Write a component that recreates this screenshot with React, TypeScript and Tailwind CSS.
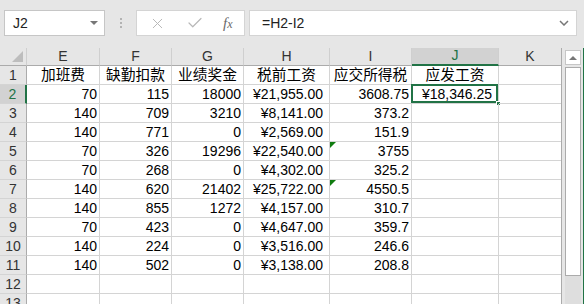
import { X, Check } from 'lucide-react';

const cols = ['E', 'F', 'G', 'H', 'I', 'J', 'K'];
const widths = ['w-[73px]', 'w-[72px]', 'w-[72px]', 'w-[86px]', 'w-[82px]', 'w-[87px]', 'w-[63px]'];

const titles = ['加班费', '缺勤扣款', '业绩奖金', '税前工资', '应交所得税', '应发工资', ''];

// E, F, G, H, I, J
const rows: (string | number)[][] = [
  [70, 115, 18000, '¥21,955.00', '3608.75', '¥18,346.25'],
  [140, 709, 3210, '¥8,141.00', '373.2'],
  [140, 771, 0, '¥2,569.00', '151.9'],
  [70, 326, 19296, '¥22,540.00', '3755'],
  [70, 268, 0, '¥4,302.00', '325.2'],
  [140, 620, 21402, '¥25,722.00', '4550.5'],
  [140, 855, 1272, '¥4,157.00', '310.7'],
  [70, 423, 0, '¥4,647.00', '359.7'],
  [140, 224, 0, '¥3,516.00', '246.6'],
  [140, 502, 0, '¥3,138.00', '208.8'],
  [],
  [],
];

const flagged = [5, 7];

function Cell({ value, col, row }: { value?: string | number; col: number; row: number }) {
  const money = col === 3 || col === 5;
  const selected = col === 5 && row === 2;
  return (
    <div
      className={`relative h-[19px] shrink-0 ${widths[col]} border-r border-b border-[#d4d4d4] flex items-end justify-end pb-[1px] ${money ? 'pr-[6px]' : 'pr-[2px]'} text-[14px] leading-[16px] text-black`}
    >
      {value !== undefined ? String(value) : ''}
      {col === 4 && flagged.includes(row) && (
        <div className="absolute left-0 top-0 w-0 h-0 border-t-[6px] border-r-[6px] border-t-[#107c10] border-r-transparent" />
      )}
      {selected && (
        <>
          <div className="absolute -left-[1px] -top-[1px] right-0 bottom-0 border-2 border-[#217346]" />
          <div className="absolute -right-[3px] -bottom-[3px] w-[5px] h-[5px] bg-[#217346] border border-white" />
        </>
      )}
    </div>
  );
}

function RowHead({ n }: { n: number }) {
  const selected = n === 2;
  return (
    <div
      className={`h-[19px] w-[27px] shrink-0 flex items-end justify-center pb-[1px] text-[14px] leading-[16px] border-b border-[#d4d4d4] ${
        selected ? 'bg-[#d2d2d2] text-[#217346] border-r-2 border-r-[#217346]' : 'bg-[#e6e6e6] text-[#333] border-r border-r-[#ababab]'
      }`}
    >
      {n}
    </div>
  );
}

export default function App() {
  return (
    <div
      className="w-[584px] h-[304px] overflow-hidden bg-[#e6e6e6] flex flex-col"
      style={{ fontFamily: '"Liberation Sans", "Noto Sans CJK SC", sans-serif' }}
    >
      {/* formula bar */}
      <div className="h-[48px] shrink-0 flex items-start pt-[10px] pl-[4px]">
        <div className="w-[101px] h-[26px] bg-white border border-[#c6c6c6] flex items-center justify-between pl-[8px] pr-[6px] text-[14px] text-[#222]">
          <span>J2</span>
          <div className="w-0 h-0 border-l-[4px] border-r-[4px] border-t-[4px] border-l-transparent border-r-transparent border-t-[#777]" />
        </div>
        <div className="w-[31px] h-[26px] flex flex-col items-center justify-center gap-[2px]">
          <div className="w-[2px] h-[2px] bg-[#b3b3b3]" />
          <div className="w-[2px] h-[2px] bg-[#b3b3b3]" />
          <div className="w-[2px] h-[2px] bg-[#b3b3b3]" />
        </div>
        <div className="w-[109px] h-[26px] bg-white border border-[#d4d4d4] flex items-center pl-[12px] text-[#b8b8b8]">
          <X size={17} strokeWidth={1.4} />
          <Check size={18} strokeWidth={1.6} className="ml-[20px]" />
          <span
            className="ml-[19px] text-[15px] italic text-[#6a6a6a]"
            style={{ fontFamily: '"Liberation Serif", serif' }}
          >
            f<span className="text-[12px]">x</span>
          </span>
        </div>
        <div className="ml-[4px] w-[328px] h-[26px] bg-white border border-[#d4d4d4] flex items-center justify-between pl-[12px] pr-[7px] text-[14px] text-[#222]">
          <span>=H2-I2</span>
          <svg width="10" height="6" viewBox="0 0 10 6">
            <path d="M1 1 L5 5 L9 1" stroke="#777" strokeWidth="1.5" fill="none" />
          </svg>
        </div>
      </div>

      {/* sheet */}
      <div className="flex flex-1 min-h-0">
        <div className="w-[562px] shrink-0 border-r border-[#ababab] bg-white overflow-hidden">
          {/* column headers */}
          <div className="flex h-[18px] bg-[#e6e6e6]">
            <div className="relative w-[27px] shrink-0 border-r border-[#cfcfcf] border-b border-b-[#ababab]">
              <div className="absolute right-[3px] bottom-[3px] w-0 h-0 border-b-[11px] border-l-[11px] border-b-[#bdbdbd] border-l-transparent" />
            </div>
            {cols.map((c, i) => (
              <div
                key={c}
                className={`${widths[i]} shrink-0 flex items-end justify-center pb-[1px] text-[14px] leading-[16px] border-r border-[#cfcfcf] ${
                  c === 'J' ? 'bg-[#d2d2d2] text-[#217346] border-b-2 border-b-[#217346]' : 'text-[#333] border-b border-b-[#ababab]'
                }`}
              >
                {c}
              </div>
            ))}
          </div>
          {/* row 1 */}
          <div className="flex">
            <RowHead n={1} />
            {titles.map((t, i) => (
              <div
                key={i}
                className={`h-[19px] shrink-0 ${widths[i]} border-r border-b border-[#d4d4d4] flex items-end justify-center text-[14.7px] leading-[18px] text-black`}
              >
                {t}
              </div>
            ))}
          </div>
          {rows.map((r, ri) => (
            <div key={ri} className="flex">
              <RowHead n={ri + 2} />
              {cols.map((_, ci) => (
                <Cell key={ci} value={r[ci]} col={ci} row={ri + 2} />
              ))}
            </div>
          ))}
        </div>

        {/* vertical scrollbar */}
        <div className="flex-1 flex flex-col pl-[3px] pt-[2px] bg-[#e6e6e6] border-r border-[#217346]">
          <div className="w-[16px] h-[15px] bg-white border border-[#c6c6c6] flex items-center justify-center">
            <div className="w-0 h-0 border-l-[4px] border-r-[4px] border-b-[4px] border-l-transparent border-r-transparent border-b-[#777]" />
          </div>
          <div className="mt-[2px] w-[16px] h-[209px] bg-white border border-[#ababab]" />
          <div className="flex-1 w-[16px] bg-[#dedede]" />
        </div>
      </div>
    </div>
  );
}
